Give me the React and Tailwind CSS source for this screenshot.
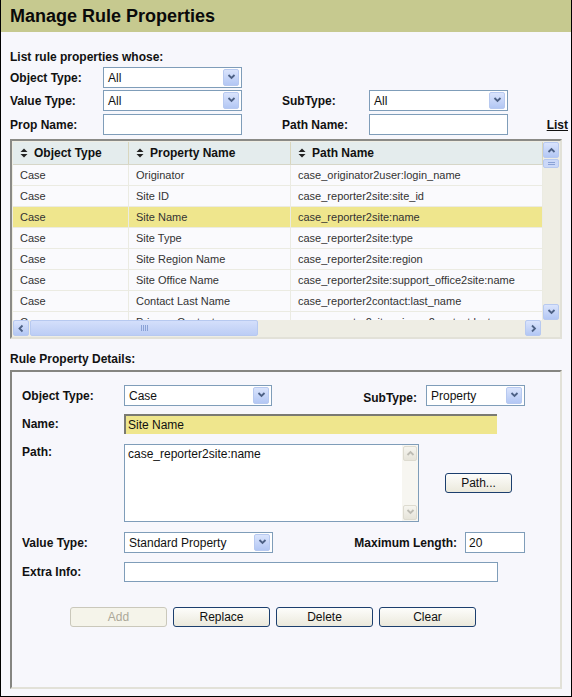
import React from 'react';

const font = "font-['Liberation_Sans',Arial,sans-serif]";

const Chevron = ({ dir = 'down', color = '#4d6185' }) => {
  const d = {
    down: 'M1.5 2 L4.5 5 L7.5 2',
    up: 'M1.5 6 L4.5 3 L7.5 6',
    left: 'M5.5 1.5 L2.5 4.5 L5.5 7.5',
    right: 'M3 1.5 L6 4.5 L3 7.5',
  }[dir];
  return (
    <svg width="9" height="9" viewBox="0 0 9 9">
      <path d={d} stroke={color} strokeWidth="1.8" fill="none" />
    </svg>
  );
};

const ArrowBox = ({ dir = 'down', className = '' }) => (
  <span
    className={`flex items-center justify-center rounded-[2px] border border-[#b7c9f0] bg-gradient-to-b from-[#dae4fc] to-[#b3c7f4] ${className}`}
  >
    <Chevron dir={dir} />
  </span>
);

const GreyBox = ({ dir, className = '' }) => (
  <span
    className={`flex items-center justify-center rounded-[2px] border border-[#dddbd0] bg-gradient-to-b from-[#f6f5ef] to-[#e6e4da] ${className}`}
  >
    <Chevron dir={dir} color="#bdbcb4" />
  </span>
);

const Select = ({ value, w, h = 'h-[21px]' }) => (
  <div className={`flex ${h} ${w} items-center border border-[#7f9db9] bg-white pr-[2px]`}>
    <span className="flex-1 truncate pl-[4px] text-[12px] text-[#111]">{value}</span>
    <ArrowBox className="h-[17px] w-[16px]" />
  </div>
);

const Input = ({ w, h = 'h-[21px]', value = '' }) => (
  <div className={`flex ${h} ${w} items-center border border-[#7f9db9] bg-white pl-[3px] text-[12px] text-[#111]`}>
    {value}
  </div>
);

const Button = ({ children, disabled, w = 'w-[97px]' }) => (
  <div
    className={`flex h-[20px] ${w} items-center justify-center rounded-[3px] border text-[12px] ${
      disabled
        ? 'border-[#cac8bb] bg-[#f5f4ea] text-[#aca899]'
        : 'border-[#1c3f6e] bg-gradient-to-b from-[#fdfdfb] to-[#ebe9dc] text-[#111]'
    }`}
  >
    {children}
  </div>
);

const SortIcon = () => (
  <svg width="8" height="10" viewBox="0 0 8 10" className="mr-[6px]">
    <path d="M4 0.5 L7.5 4 L0.5 4 Z" fill="#222" />
    <path d="M4 9.5 L7.5 6 L0.5 6 Z" fill="#222" />
  </svg>
);

const rows = [
  ['Case', 'Originator', 'case_originator2user:login_name'],
  ['Case', 'Site ID', 'case_reporter2site:site_id'],
  ['Case', 'Site Name', 'case_reporter2site:name'],
  ['Case', 'Site Type', 'case_reporter2site:type'],
  ['Case', 'Site Region Name', 'case_reporter2site:region'],
  ['Case', 'Site Office Name', 'case_reporter2site:support_office2site:name'],
  ['Case', 'Contact Last Name', 'case_reporter2contact:last_name'],
  ['Case', 'Primary Contact', 'case_reporter2site:primary2contact:last_name'],
];

const cols = ['w-[116px]', 'w-[162px]', 'w-[252px]'];

const PropTable = () => (
  <div className="flex h-[200px] w-[552px] flex-col border-2 border-t-[#8a8a86] border-l-[#8a8a86] border-r-[#e2e1d8] border-b-[#e2e1d8] bg-[#eeede4] p-px">
    <div className="flex h-[178px]">
      <div className="flex w-[530px] flex-col overflow-hidden bg-[#fafafd]">
        <div className="flex h-[23px] shrink-0 border-b border-[#d6d6c8] bg-[#e4eced] text-[12px] font-bold text-[#111]">
          {['Object Type', 'Property Name', 'Path Name'].map((h, i) => (
            <div key={h} className={`${cols[i]} flex items-center border-r border-[#d9d6bd] pl-[7px]`}>
              <SortIcon />
              {h}
            </div>
          ))}
        </div>
        {rows.map((r, ri) => (
          <div
            key={ri}
            className={`flex h-[21px] shrink-0 border-b border-[#ebebe2] text-[11px] text-[#333] ${
              ri === 2 ? 'bg-[#efe68d]' : ''
            }`}
          >
            {r.map((c, ci) => (
              <div key={ci} className={`${cols[ci]} flex items-center border-r border-[#ebebe2] pl-[7px]`}>
                {c}
              </div>
            ))}
          </div>
        ))}
      </div>
      <div className="flex w-[16px] flex-col">
        <ArrowBox dir="up" className="h-[16px] w-[16px]" />
        <div className="mt-px flex h-[9px] w-[16px] flex-col items-center justify-center gap-px rounded-[2px] border border-[#b7c9f0] bg-[#cbd8f8]">
          <span className="h-px w-[7px] bg-[#8aa2d6]" />
          <span className="h-px w-[7px] bg-[#8aa2d6]" />
        </div>
        <div className="flex-1" />
        <ArrowBox dir="down" className="h-[16px] w-[16px]" />
      </div>
    </div>
    <div className="flex h-[16px]">
      <ArrowBox dir="left" className="h-[16px] w-[16px]" />
      <div className="ml-px flex h-[16px] w-[228px] items-center justify-center gap-px rounded-[2px] border border-[#b7c9f0] bg-gradient-to-b from-[#d4dffb] to-[#bccdf5]">
        <span className="h-[6px] w-px bg-[#8aa2d6]" />
        <span className="h-[6px] w-px bg-[#8aa2d6]" />
        <span className="h-[6px] w-px bg-[#8aa2d6]" />
        <span className="h-[6px] w-px bg-[#8aa2d6]" />
      </div>
      <div className="flex-1" />
      <ArrowBox dir="right" className="h-[16px] w-[16px]" />
      <div className="w-[18px]" />
    </div>
  </div>
);

export default function App() {
  return (
    <div className={`${font} flex h-[697px] w-[572px] flex-col border-x border-b border-black bg-[#f7f7fc] text-[#111]`}>
      <div className="flex h-[32px] shrink-0 items-center bg-[#c6c98f] pl-[9px] text-[18px] font-bold text-[#0a0a0a]">
        Manage Rule Properties
      </div>
      <div className="flex flex-col px-[9px]">
        <div className="mt-[17px] text-[12px] font-bold leading-[16px]">List rule properties whose:</div>
        <div className="mt-[2px] flex h-[21px] items-center">
          <span className="w-[93px] text-[12px] font-bold">Object Type:</span>
          <Select value="All" w="w-[139px]" />
        </div>
        <div className="mt-[2px] flex h-[21px] items-center">
          <span className="w-[93px] text-[12px] font-bold">Value Type:</span>
          <Select value="All" w="w-[139px]" />
          <span className="ml-[40px] w-[87px] text-[12px] font-bold">SubType:</span>
          <Select value="All" w="w-[139px]" />
        </div>
        <div className="mt-[3px] flex h-[21px] items-center">
          <span className="w-[93px] text-[12px] font-bold">Prop Name:</span>
          <Input w="w-[139px]" />
          <span className="ml-[40px] w-[87px] text-[12px] font-bold">Path Name:</span>
          <Input w="w-[139px]" />
          <span className="ml-auto mr-[-6px] text-[12px] font-bold underline">List</span>
        </div>
        <div className="mt-[4px]">
          <PropTable />
        </div>
        <div className="mt-[12px] text-[12px] font-bold leading-[16px]">Rule Property Details:</div>
        <div className="mt-[3px] flex h-[319px] w-[552px] flex-col border-2 border-t-[#858581] border-l-[#858581] border-r-[#e2e1d8] border-b-[#e2e1d8] pl-[10px]">
          <div className="mt-[13px] flex h-[21px] items-center">
            <span className="w-[102px] text-[12px] font-bold">Object Type:</span>
            <Select value="Case" w="w-[148px]" />
            <span className="ml-auto mr-[9px] mt-[4px] text-[12px] font-bold">SubType:</span>
            <Select value="Property" w="w-[99px]" />
            <span className="w-[35px]" />
          </div>
          <div className="mt-[8px] flex h-[20px] items-center">
            <span className="w-[102px] text-[12px] font-bold">Name:</span>
            <div className="flex h-[20px] w-[373px] items-center border-l-2 border-t-2 border-[#7a7a72] bg-[#efe68d] pl-[2px] text-[12px]">
              Site Name
            </div>
          </div>
          <div className="mt-[10px] flex h-[78px]">
            <span className="mt-[1px] w-[102px] text-[12px] font-bold leading-[14px]">Path:</span>
            <div className="flex h-[78px] w-[295px] border border-[#7f9db9] bg-white">
              <span className="flex-1 pl-[3px] pt-[2px] text-[12px] leading-[14px]">case_reporter2site:name</span>
              <div className="flex w-[16px] flex-col bg-[#f7f6f1] p-px">
                <GreyBox dir="up" className="h-[15px] w-[14px]" />
                <div className="flex-1" />
                <GreyBox dir="down" className="h-[15px] w-[14px]" />
              </div>
            </div>
            <div className="ml-[26px] mt-[29px]">
              <Button w="w-[67px]">
                <span className="h-[19px] leading-[19px]">Path...</span>
              </Button>
            </div>
          </div>
          <div className="mt-[10px] flex h-[21px] items-center">
            <span className="w-[102px] text-[12px] font-bold">Value Type:</span>
            <Select value="Standard Property" w="w-[149px]" />
            <span className="ml-auto mr-[8px] text-[12px] font-bold">Maximum Length:</span>
            <Input w="w-[60px]" value="20" />
            <span className="w-[35px]" />
          </div>
          <div className="mt-[9px] flex h-[20px] items-center">
            <span className="w-[102px] text-[12px] font-bold">Extra Info:</span>
            <Input w="w-[374px]" h="h-[20px]" />
          </div>
          <div className="ml-[48px] mt-[25px] flex gap-[6px]">
            <Button disabled>Add</Button>
            <Button>Replace</Button>
            <Button>Delete</Button>
            <Button>Clear</Button>
          </div>
        </div>
      </div>
    </div>
  );
}
